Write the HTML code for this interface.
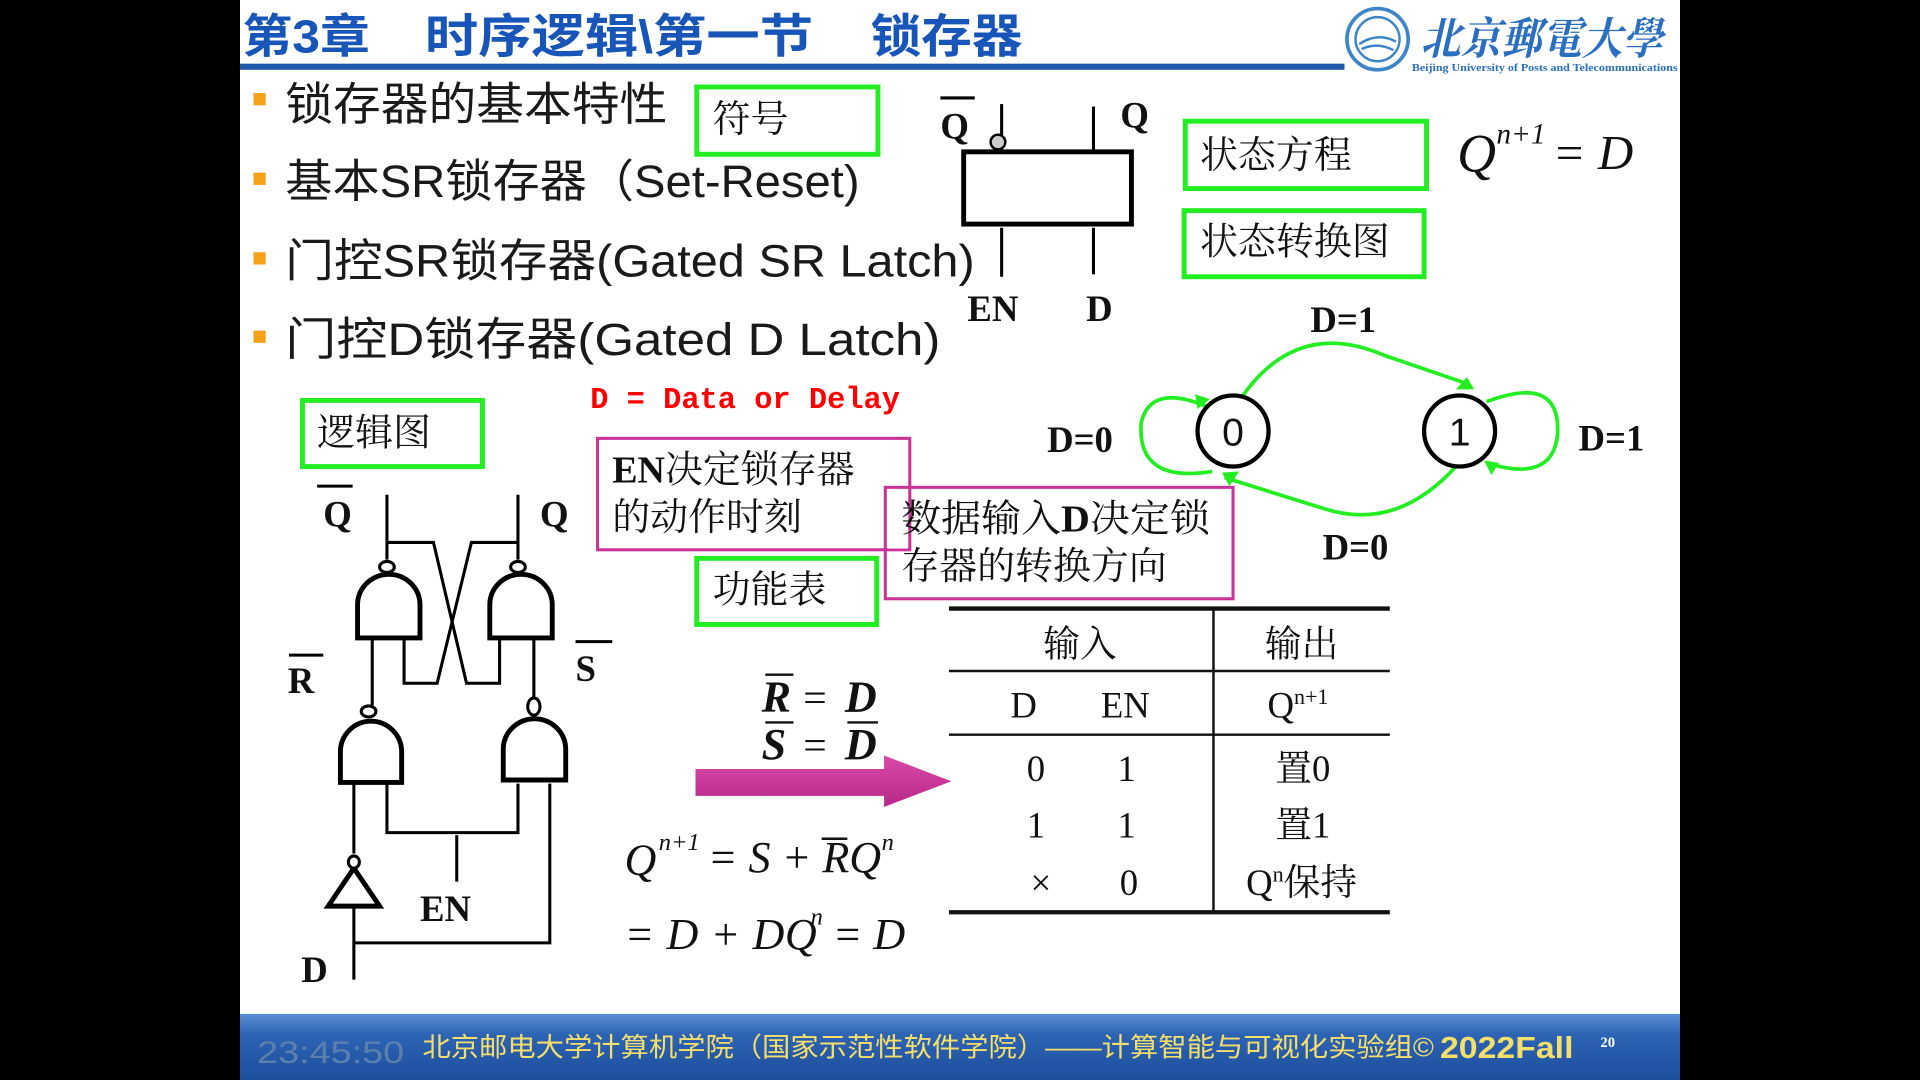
<!DOCTYPE html>
<html><head><meta charset="utf-8"><style>
html,body{margin:0;padding:0;background:#000;width:1920px;height:1080px;overflow:hidden}
svg{display:block}
.cn{font-family:"Liberation Sans","Noto Sans CJK SC",sans-serif}
.sf{font-family:"Liberation Serif","Noto Serif CJK SC",serif}
.it{font-family:"Liberation Serif",serif;font-style:italic}
</style></head><body>
<svg width="1920" height="1080" viewBox="0 0 1568 882" preserveAspectRatio="none" xmlns="http://www.w3.org/2000/svg">
<defs>
<linearGradient id="bar" x1="0" y1="0" x2="0" y2="1"><stop offset="0" stop-color="#5b8fd4"/><stop offset="0.3" stop-color="#2d64b4"/><stop offset="1" stop-color="#1d4f9c"/></linearGradient>
<linearGradient id="arr" x1="0" y1="0" x2="0" y2="1"><stop offset="0" stop-color="#d84aa8"/><stop offset="1" stop-color="#b8288a"/></linearGradient>
</defs>
<rect x="0" y="0" width="1568" height="882" fill="#000"/>
<rect x="196" y="0" width="1176" height="882" fill="#fff"/>
<!-- title -->
<g class="cn" font-size="38" font-weight="bold" fill="#1756b8">
<text x="198" y="43" textLength="104" lengthAdjust="spacingAndGlyphs">第3章</text>
<text x="347" y="43" textLength="317" lengthAdjust="spacingAndGlyphs">时序逻辑\第一节</text>
<text x="711" y="43" textLength="124" lengthAdjust="spacingAndGlyphs">锁存器</text>
</g>
<rect x="196" y="52" width="902" height="5" fill="#1e5aae"/>
<!-- logo -->
<circle cx="1125" cy="32" r="25" fill="none" stroke="#3d86c8" stroke-width="3"/>
<circle cx="1125" cy="32" r="18" fill="none" stroke="#3d86c8" stroke-width="2"/>
<path d="M1110 36 Q1125 26 1140 34 M1112 40 Q1125 34 1138 41" stroke="#3d86c8" stroke-width="2" fill="none"/>
<text x="1160" y="44" font-family="'Noto Serif CJK SC',serif" font-size="36" font-weight="bold" font-style="italic" fill="#2a6fc0" textLength="198" lengthAdjust="spacingAndGlyphs">北京郵電大學</text>
<text x="1153" y="58" class="sf" font-size="8.5" font-weight="bold" fill="#2a6fc0" textLength="217" lengthAdjust="spacingAndGlyphs">Beijing University of Posts and Telecommunications</text>
<!-- bullets -->
<g fill="#f7a11a"><rect x="207" y="76" width="10" height="10"/><rect x="207" y="141" width="10" height="10"/><rect x="207" y="206" width="10" height="10"/><rect x="207" y="270" width="10" height="10"/></g>
<g class="cn" font-size="37" fill="#1a1a1a">
<text x="233" y="98" textLength="312" lengthAdjust="spacingAndGlyphs">锁存器的基本特性</text>
<text x="233" y="161" textLength="469" lengthAdjust="spacingAndGlyphs">基本SR锁存器（Set-Reset)</text>
<text x="233" y="226" textLength="563" lengthAdjust="spacingAndGlyphs">门控SR锁存器(Gated SR Latch)</text>
<text x="233" y="290" textLength="535" lengthAdjust="spacingAndGlyphs">门控D锁存器(Gated D Latch)</text>
</g>
<!-- green boxes -->
<g fill="none" stroke="#22ee22" stroke-width="4">
<rect x="569" y="71" width="148" height="55"/>
<rect x="968" y="99" width="197" height="55"/>
<rect x="967" y="172" width="196" height="54"/>
<rect x="247" y="327" width="147" height="54"/>
<rect x="569" y="456" width="147" height="54"/>
</g>
<g class="sf" font-size="31" fill="#111">
<text x="582" y="108">符号</text>
<text x="980" y="137">状态方程</text>
<text x="980" y="208">状态转换图</text>
<text x="259" y="364">逻辑图</text>
<text x="582" y="492">功能表</text>
</g>
<!-- symbol -->
<g stroke="#000" fill="none">
<rect x="787" y="124" width="137" height="59" stroke-width="4"/>
<line x1="818" y1="85" x2="818" y2="110" stroke-width="2.5"/>
<circle cx="815" cy="116" r="6" stroke-width="2" fill="#ccc"/>
<line x1="893" y1="87" x2="893" y2="124" stroke-width="2.5"/>
<line x1="818" y1="186" x2="818" y2="226" stroke-width="2.5"/>
<line x1="893" y1="186" x2="893" y2="224" stroke-width="2.5"/>
<line x1="768" y1="80" x2="796" y2="80" stroke-width="2.5"/>
</g>
<g class="sf" font-weight="bold" font-size="30" fill="#111">
<text x="768" y="113">Q</text><text x="915" y="104">Q</text>
<text x="790" y="262">EN</text><text x="887" y="262">D</text>
</g>
<text x="1190" y="140" class="it" font-size="44" fill="#111">Q</text>
<text x="1222" y="117" class="it" font-size="24" fill="#111">n+1</text>
<text x="1268" y="138" class="it" font-size="40" fill="#111">= D</text>
<!-- state diagram -->
<g fill="none" stroke="#22ee22" stroke-width="3">
<path d="M1015 323 Q1060 260 1130 290 L1200 314"/>
<path d="M1189 381 Q1140 435 1080 415 L1000 390"/>
<path d="M988 333 Q940 312 932 345 Q928 395 990 385"/>
<path d="M1214 328 Q1275 305 1272 355 Q1268 395 1214 378"/>
</g>
<g fill="#22ee22">
<path d="M1204 318 L1189 318 L1198 308 Z"/>
<path d="M998 386 L1012 385 L1004 397 Z"/>
<path d="M988 326 L976 322 L978 334 Z"/>
<path d="M1212 376 L1218 388 L1224 378 Z"/>
</g>
<g fill="#fff" stroke="#000" stroke-width="3.5">
<circle cx="1007" cy="352" r="29"/><circle cx="1192" cy="352" r="29"/>
</g>
<g class="cn" font-size="32" fill="#111" text-anchor="middle">
<text x="1007" y="364">0</text><text x="1192" y="364">1</text>
</g>
<g class="sf" font-weight="bold" font-size="30" fill="#111" text-anchor="middle">
<text x="1097" y="271">D=1</text><text x="882" y="369">D=0</text>
<text x="1316" y="368">D=1</text><text x="1107" y="457">D=0</text>
</g>
<!-- red -->
<text x="482" y="333" font-family="'Liberation Mono',monospace" font-weight="bold" font-size="25" fill="#ff0000" textLength="253" lengthAdjust="spacingAndGlyphs">D = Data or Delay</text>
<!-- magenta boxes -->
<g fill="none" stroke="#cc3399" stroke-width="2.5">
<rect x="488" y="358" width="255" height="91"/>
<rect x="723" y="398" width="284" height="91"/>
</g>
<rect x="725" y="400" width="16" height="48" fill="#fff"/>
<g class="sf" font-size="31" fill="#111">
<text x="500" y="394"><tspan font-weight="bold">EN</tspan>决定锁存器</text>
<text x="500" y="433">的动作时刻</text>
<text x="736" y="434" textLength="252" lengthAdjust="spacingAndGlyphs">数据输入<tspan font-weight="bold">D</tspan>决定锁</text>
<text x="736" y="473">存器的转换方向</text>
</g>
<!-- table -->
<g stroke="#111">
<line x1="775" y1="497" x2="1135" y2="497" stroke-width="3.5"/>
<line x1="775" y1="548" x2="1135" y2="548" stroke-width="2"/>
<line x1="775" y1="600" x2="1135" y2="600" stroke-width="2"/>
<line x1="775" y1="745" x2="1135" y2="745" stroke-width="3.5"/>
<line x1="991" y1="497" x2="991" y2="745" stroke-width="2"/>
</g>
<g class="sf" font-size="30" fill="#111" text-anchor="middle">
<text x="882" y="536">输入</text><text x="1063" y="536">输出</text>
<text x="836" y="586">D</text><text x="919" y="586">EN</text>
<text x="1060" y="586">Q<tspan font-size="18" dy="-11">n+1</tspan></text>
<text x="846" y="638">0</text><text x="920" y="638">1</text><text x="1064" y="638">置0</text>
<text x="846" y="684">1</text><text x="920" y="684">1</text><text x="1064" y="684">置1</text>
<text x="850" y="731">×</text><text x="922" y="731">0</text><text x="1063" y="731">Q<tspan font-size="18" dy="-11">n</tspan><tspan dy="11">保持</tspan></text>
</g>
<!-- equations -->
<g class="it" font-size="36" fill="#111" font-weight="bold">
<text x="622" y="581">R</text><text x="622" y="620">S</text>
<text x="690" y="581">D</text><text x="690" y="620">D</text>
</g>
<g class="sf" font-size="34" fill="#111"><text x="656" y="581">=</text><text x="656" y="620">=</text></g>
<g stroke="#111" stroke-width="2"><line x1="625" y1="551" x2="648" y2="551"/><line x1="625" y1="590" x2="648" y2="590"/><line x1="692" y1="590" x2="717" y2="590"/></g>
<path d="M568 628 L722 628 L722 617 L777 638 L722 659 L722 650 L568 650 Z" fill="url(#arr)"/>
<g class="it" font-size="36" fill="#111">
<text x="510" y="714">Q</text><text x="538" y="694" font-size="20">n+1</text>
<text x="578" y="712">= S + RQ</text><text x="720" y="694" font-size="20">n</text>
<text x="510" y="775" textLength="157" lengthAdjust="spacing">= D + DQ</text><text x="662" y="755" font-size="20">n</text>
<text x="680" y="775">= D</text>
</g>
<line x1="671" y1="685" x2="692" y2="685" stroke="#111" stroke-width="2"/>
<!-- logic diagram -->
<g fill="none" stroke="#000" stroke-width="2.5">
<path d="M316 404 V457 M316 443 H354 L381 558 H408 V522"/>
<path d="M423 404 V457 M423 443 H385 L357 558 H330 V522"/>
<path d="M304 522 V576 M436 522 V570"/>
<path d="M289 640 V697 M316 640 V680 H423 V640 M449 640 V770 H289 M373 682 V720 M289 740 V800"/>
</g>
<g fill="#fff" stroke="#000" stroke-width="4">
<path d="M292 521 V494 A25.5 25 0 0 1 343 494 V521 Z"/>
<path d="M400 521 V494 A25.5 25 0 0 1 451 494 V521 Z"/>
<path d="M278 639 V614 A25 25 0 0 1 328 614 V639 Z"/>
<path d="M411 637 V612 A25.5 25 0 0 1 462 612 V637 Z"/>
<path d="M289 709 L310 740 L268 740 Z"/>
</g>
<g fill="#fff" stroke="#000" stroke-width="2.5">
<ellipse cx="316" cy="463" rx="6" ry="4.5"/><ellipse cx="423" cy="463" rx="6" ry="4.5"/>
<ellipse cx="301" cy="581" rx="6" ry="4.5"/><ellipse cx="436" cy="577" rx="5" ry="7"/>
<ellipse cx="289" cy="704" rx="4.5" ry="5"/>
</g>
<g stroke="#000" stroke-width="2.5">
<line x1="259" y1="397" x2="288" y2="397"/><line x1="236" y1="535" x2="264" y2="535"/><line x1="470" y1="524" x2="500" y2="524"/>
</g>
<g class="sf" font-weight="bold" font-size="30" fill="#111">
<text x="264" y="430">Q</text><text x="441" y="430">Q</text>
<text x="235" y="566">R</text><text x="470" y="556">S</text>
<text x="343" y="752">EN</text><text x="246" y="802">D</text>
</g>
<!-- bottom bar -->
<rect x="196" y="828" width="1176" height="54" fill="url(#bar)"/>
<text x="210" y="868" class="cn" font-size="26" fill="#5d7fae" textLength="120" lengthAdjust="spacingAndGlyphs">23:45:50</text>
<text x="345" y="863" class="cn" font-size="22" fill="#f5df6a" textLength="826" lengthAdjust="spacingAndGlyphs">北京邮电大学计算机学院（国家示范性软件学院）——计算智能与可视化实验组©</text>
<text x="1176" y="864" class="cn" font-size="25" font-weight="bold" fill="#f5df6a" textLength="109" lengthAdjust="spacingAndGlyphs">2022Fall</text>
<text x="1307" y="855" class="sf" font-size="12" font-weight="bold" fill="#fff">20</text>
</svg>
</body></html>
